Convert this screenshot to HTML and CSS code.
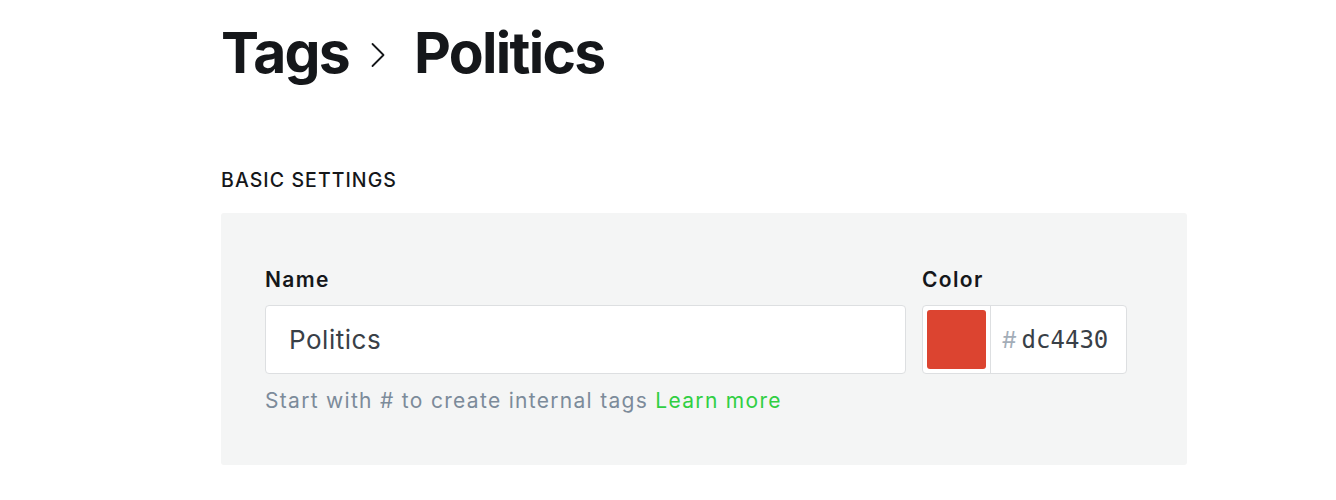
FILE: index.html
```html
<!DOCTYPE html>
<html lang="en">
<head>
<meta charset="utf-8">
<title>Tags › Politics</title>
<link rel="stylesheet" href="styles.css">
</head>
<body>
<main class="canvas">
  <header class="page-header">
    <h1 class="title">
      <span class="crumb">Tags</span>
      <svg class="chevron" width="14" height="30" viewBox="0 0 14 30" aria-hidden="true"><polyline points="1.5,4 12.5,15 1.5,26" fill="none" stroke="#15171a" stroke-width="1.8" stroke-linecap="round" stroke-linejoin="round"/></svg>
      <span class="current">Politics</span>
    </h1>
  </header>

  <section class="section">
    <h2 class="section-title">BASIC SETTINGS</h2>
    <div class="panel">
      <div class="field name-field">
        <label class="label" for="tag-name">Name</label>
        <input id="tag-name" class="text-input" type="text" value="Politics">
        <p class="hint">Start with # to create internal tags <a class="link" href="#">Learn more</a></p>
      </div>
      <div class="field color-field">
        <span class="label">Color</span>
        <div class="color-input">
          <span class="swatch"></span>
          <span class="hex"><span class="hash">#</span><span class="hex-value">dc4430</span></span>
        </div>
      </div>
    </div>
  </section>
</main>
</body>
</html>
```

FILE: styles.css
```css
html, body {
  margin: 0;
  padding: 0;
  background: #ffffff;
}

body {
  font-family: Inter, "Noto Sans", sans-serif;
  color: #15171a;
}

.canvas {
  width: 966px;
  margin-left: 221px;
  padding-top: 18px;
}

.title {
  margin: 0;
  display: flex;
  align-items: center;
  font-size: 57px;
  font-weight: 700;
  letter-spacing: -0.03em;
  line-height: 70px;
  color: #15171a;
}

.chevron {
  margin: 4px 29px 0 22px;
  flex: none;
}

.section {
  margin-top: 80px;
}

.section-title {
  margin: 0 0 21px 0;
  font-size: 19.5px;
  font-weight: 500;
  letter-spacing: 0.055em;
  line-height: 24px;
  color: #15171a;
}

.panel {
  background: #f4f5f5;
  border-radius: 3px;
  padding: 54px 60px 50px 44px;
  display: grid;
  grid-template-columns: 641px 205px;
  column-gap: 16px;
}

.field {
  display: flex;
  flex-direction: column;
}

.label {
  display: block;
  font-size: 21px;
  font-weight: 600;
  letter-spacing: 0.065em;
  line-height: 26px;
  color: #15171a;
  margin-bottom: 12px;
}

.text-input {
  box-sizing: border-box;
  height: 69px;
  width: 100%;
  border: 1px solid #dddfe1;
  border-radius: 4px;
  background: #ffffff;
  padding: 0 23px;
  font-family: Inter, "Noto Sans", sans-serif;
  font-size: 26px;
  letter-spacing: 0.02em;
  color: #394047;
  outline: none;
}

.hint {
  margin: 13px 0 0 0;
  font-size: 21px;
  letter-spacing: 0.062em;
  line-height: 28px;
  color: #7c8b9a;
}

.link {
  color: #30cf43;
  text-decoration: none;
}

.color-input {
  box-sizing: border-box;
  height: 69px;
  display: flex;
  align-items: stretch;
  border: 1px solid #dddfe1;
  border-radius: 4px;
  background: #ffffff;
}

.swatch {
  width: 59px;
  margin: 4px;
  border-radius: 3px;
  background: #dc4430;
  flex: none;
}

.hex {
  flex: 1;
  display: flex;
  align-items: center;
  border-left: 1px solid #dddfe1;
  padding-left: 11px;
}

.hash {
  font-size: 23px;
  color: #a3adb8;
  margin-right: 5px;
}

.hex-value {
  font-family: "DejaVu Sans Mono", "Liberation Mono", monospace;
  font-size: 24px;
  color: #394047;
}
```
